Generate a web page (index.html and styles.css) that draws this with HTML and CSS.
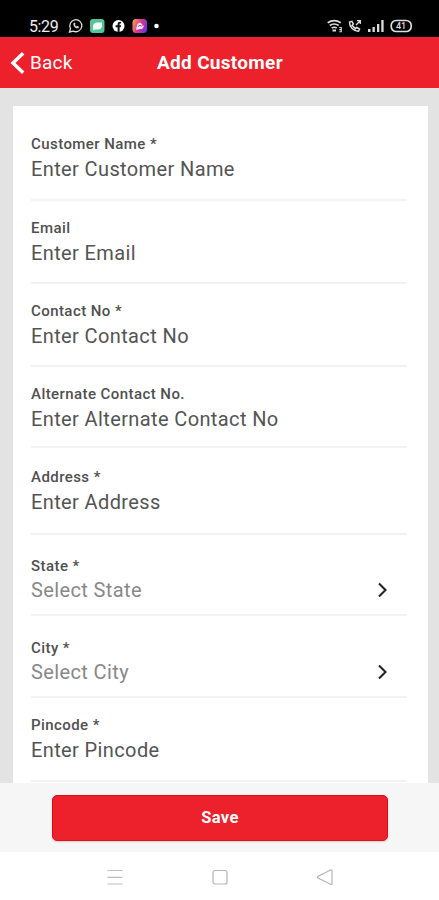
FILE: index.html
```html
<!DOCTYPE html>
<html lang="en">
<head>
<meta charset="utf-8">
<title>Add Customer</title>
<link rel="stylesheet" href="styles.css">
</head>
<body>
<div class="screen">
  <div class="status">
    <span class="time">5:29</span>
    <svg class="s-left" width="94" height="16" viewBox="0 0 94 16">
      <defs>
        <linearGradient id="insta" x1="0" y1="0.3" x2="1" y2="0.7"><stop offset="0" stop-color="#f49a55"/><stop offset=".45" stop-color="#e0358b"/><stop offset="1" stop-color="#6c35dc"/></linearGradient>
      </defs>
      <path d="M1.500 14l1-3.500a6 6 0 1 1 2.700 2.600z" fill="none" stroke="#ddd" stroke-width="1.300"/>
      <path d="M5.500 5.200c-.6 2.800 2.200 5.600 5 5l.5-1.500-1.700-.8-.8.7-1.700-1.700.7-.8-.7-1.500z" fill="#ddd"/>
      <rect x="22" y="1" width="14.500" height="14" rx="3" fill="#55c39b"/>
      <path d="M25 7.500q1-3 4-3h5v4q-1 3-4 3h-3l-2 1z" fill="#eefff8"/>
      <circle cx="50.500" cy="8" r="6" fill="#fff"/>
      <path d="M49.600 14V9.300h-2V7.300h2V6q0-2.500 3.500-2.100v1.700c-1.300-.1-1.500.1-1.500 1v.7h1.500l-.4 2h-1.100V14z" fill="#111"/>
      <rect x="64.500" y="1" width="14.500" height="14" rx="3.500" fill="url(#insta)"/>
      <path d="M68 12l.7-3.600q.5-3.400 3.600-4l3.500 3.500q-.8 3.300-3.900 3.200z" fill="#ffe9fa"/>
      <path d="M70 8.700l2-1.500 1.200 1 1.700-1.200" fill="none" stroke="#d13ba0"/>
      <circle cx="88.500" cy="8" r="2.300" fill="#fff"/>
    </svg>
    <svg class="s-right" width="86" height="16" viewBox="0 0 86 16">
      <g fill="none" stroke="#ddd" stroke-width="1.700">
        <path d="M.7 4.700q6.500-4.200 13 0M2.700 7.500q4.500-3 9 0M4.700 10.100q2.500-1.700 5 0"/>
        <path d="M5.500 12.500h3.500" stroke-width="2"/>
        <path d="M12.300 9.500h2v4.300h-2M12.300 11.600h2" stroke-width="1.100"/>
        <path d="M22.500 4c-.2 5 4.200 9.500 9 9.300l1-2.300-2.600-1.500-1.500 1.200-3.300-3.300 1.200-1.500-1.400-2.600z" stroke-width="1.500"/>
        <path d="M29 7l4-4M30 2.700h3.300v3.300" stroke-width="1.300"/>
        <rect x="64.200" y="2.500" width="20" height="11" rx="5" stroke-width="1.700"/>
      </g>
      <g fill="#ddd"><rect x="41" y="11" width="2.500" height="3"/><rect x="45.500" y="9" width="2.300" height="5"/><rect x="50" y="6" width="2.300" height="8"/><rect x="54.300" y="2" width="2.300" height="12"/></g>
      <text x="69" y="11.200" class="battery">41</text>
    </svg>
  </div>
  <header class="bar">
    <div class="back">
      <svg width="16" height="24" viewBox="0 0 16 24"><path d="M13.200 2.300L3 12l10.200 9.700" fill="none" stroke="#fff" stroke-width="3.500"/></svg>
      <span>Back</span>
    </div>
    <h1 class="title">Add Customer</h1>
  </header>
  <main class="content">
    <form class="card">
      <div class="field first"><div class="label">Customer Name *</div><div class="value">Enter Customer Name</div></div>
      <div class="field"><div class="label">Email</div><div class="value">Enter Email</div></div>
      <div class="field"><div class="label">Contact No *</div><div class="value">Enter Contact No</div></div>
      <div class="field alternate"><div class="label">Alternate Contact No.</div><div class="value">Enter Alternate Contact No</div></div>
      <div class="field address"><div class="label">Address *</div><div class="value">Enter Address</div></div>
      <div class="field select state"><div class="label">State *</div><div class="value"><span>Select State</span><svg class="chev" width="12" height="18" viewBox="0 0 12 18"><path d="M2 2.500L8.500 9 2 15.500" fill="none" stroke="#222" stroke-width="2.100"/></svg></div></div>
      <div class="field select city"><div class="label">City *</div><div class="value"><span>Select City</span><svg class="chev" width="12" height="18" viewBox="0 0 12 18"><path d="M2 2.500L8.500 9 2 15.500" fill="none" stroke="#222" stroke-width="2.100"/></svg></div></div>
      <div class="field pincode"><div class="label">Pincode *</div><div class="value">Enter Pincode</div></div>
    </form>
  </main>
  <footer class="footer"><button class="save" type="button">Save</button></footer>
  <nav class="nav">
    <svg width="18" height="18" viewBox="0 0 18 18"><path d="M1.500 2.500h15M1.500 9.300h15M1.500 16h15" stroke="#bdbdbd" stroke-width="1.200"/></svg>
    <svg width="18" height="18" viewBox="0 0 18 18"><rect x="2" y="2.500" width="14" height="13.500" rx="2" fill="none" stroke="#b5b5b5" stroke-width="1.200"/></svg>
    <svg width="18" height="18" viewBox="0 0 18 18"><path d="M2 8.300L14.500 2q1.500-.5 1.500 1.200v12q0 1.700-1.500 1L2 10q-1-.8 0-1.700z" fill="none" stroke="#b5b5b5" stroke-width="1.200"/></svg>
  </nav>
</div>
</body>
</html>
```
FILE: styles.css
```css
* { box-sizing: border-box; }
body { margin: 0; font-family: Roboto, "Liberation Sans", sans-serif; }
.screen { width: 439px; height: 900px; display: flex; flex-direction: column; overflow: hidden; background: #fff; }
.status { height: 37px; flex: none; background: #000; display: flex; align-items: flex-start; padding: 18px 26px 0 29px; color: #eee; }
.time { width: 39px; font-size: 16px; line-height: 17px; letter-spacing: -0.4px; }
.s-right { margin-left: auto; }
.battery { font-size: 9px; font-weight: 500; fill: #ddd; }
.bar { height: 51px; flex: none; background: #ed212b; color: #fff; display: grid; grid-template-columns: 1fr auto 1fr; align-items: center; padding: 0 10px; }
.back { display: flex; align-items: center; gap: 4px; font-size: 19px; letter-spacing: 0.2px; }
.title { margin: 0; font-size: 19px; font-weight: 700; letter-spacing: 0.3px; padding-left: 1px; }
.content { height: 695px; flex: none; background: #e3e3e4; padding: 18px 11px 0 13px; overflow: hidden; }
.card { height: 677px; background: #fff; padding: 0 21px 0 18px; }
.field { height: 83px; padding-top: 17px; border-bottom: 2px solid #f2f2f2; }
.first { height: 95px; padding-top: 28px; }
.alternate { height: 81px; }
.address { height: 87px; padding-top: 19px; }
.state { height: 81px; padding-top: 21px; }
.city { height: 82px; padding-top: 22px; }
.pincode { height: 84px; padding-top: 17px; }
.label { font-size: 15px; font-weight: 500; line-height: 20px; letter-spacing: 0.43px; color: #505050; }
.value { font-size: 20px; line-height: 30px; letter-spacing: 0.38px; color: #545454; display: flex; align-items: center; justify-content: space-between; }
.select .value { line-height: 28px; color: #888; padding-right: 18px; }
.footer { height: 69px; flex: none; background: #f6f6f6; display: flex; justify-content: center; padding: 12px 0 0; }
.save { width: 336px; height: 46px; border: 1px solid #e40c18; border-radius: 5px; background: #ed212b; color: #fff; font: 700 16.5px/44px Roboto, sans-serif; letter-spacing: 0.4px; padding: 0 0 0 1px; box-shadow: 0 1px 2px rgba(0, 0, 0, .15); }
.nav { flex: 1; display: flex; justify-content: space-between; padding: 16px 105px 0 106px; }
```
